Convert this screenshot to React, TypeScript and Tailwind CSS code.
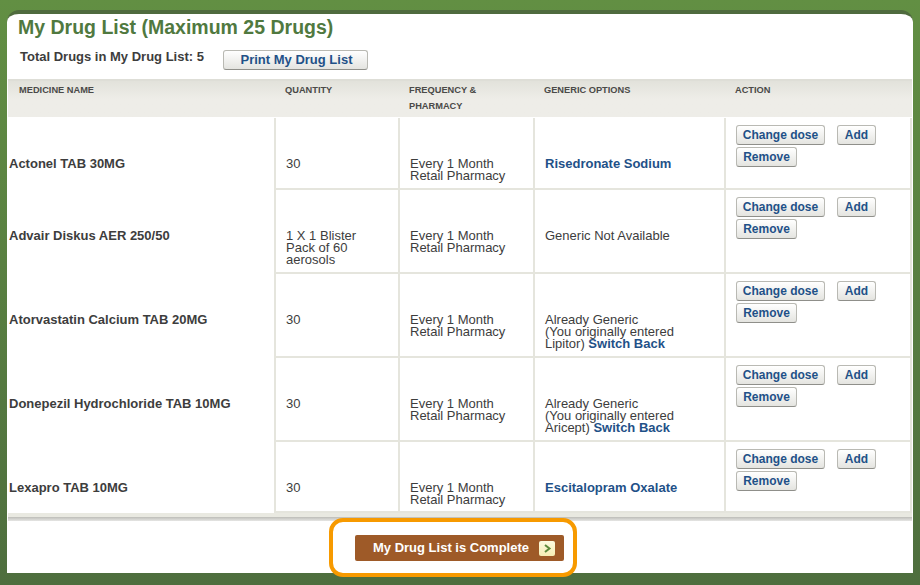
import React from 'react';

type Drug = {
  name: string;
  quantity: string[];
  generic: React.ReactNode;
  height: string;
};

const SwitchBack = () => <a className="font-bold text-[#1f5188]">Switch Back</a>;

const drugs: Drug[] = [
  {
    name: 'Actonel TAB 30MG',
    quantity: ['30'],
    generic: <a className="font-bold text-[#1f5188]">Risedronate Sodium</a>,
    height: 'h-[72px]',
  },
  {
    name: 'Advair Diskus AER 250/50',
    quantity: ['1 X 1 Blister', 'Pack of 60', 'aerosols'],
    generic: 'Generic Not Available',
    height: 'h-[84px]',
  },
  {
    name: 'Atorvastatin Calcium TAB 20MG',
    quantity: ['30'],
    generic: (
      <>
        Already Generic
        <br />
        (You originally entered
        <br />
        Lipitor) <SwitchBack />
      </>
    ),
    height: 'h-[84px]',
  },
  {
    name: 'Donepezil Hydrochloride TAB 10MG',
    quantity: ['30'],
    generic: (
      <>
        Already Generic
        <br />
        (You originally entered
        <br />
        Aricept) <SwitchBack />
      </>
    ),
    height: 'h-[84px]',
  },
  {
    name: 'Lexapro TAB 10MG',
    quantity: ['30'],
    generic: <a className="font-bold text-[#1f5188]">Escitalopram Oxalate</a>,
    height: 'h-[71px]',
  },
];

const GrayButton = ({ label, className }: { label: string; className: string }) => (
  <button
    className={`block h-5 rounded-[3px] border border-[#b9b9b3] border-b-[#8f8f8a] bg-gradient-to-b from-white to-[#e4e4e0] font-bold leading-[16px] text-[#1f5188] ${className}`}
  >
    {label}
  </button>
);

const App: React.FC = () => {
  return (
    <div className="h-[585px] w-[920px] overflow-hidden bg-gradient-to-b from-[#628f43] to-[#4e6e3e] px-[7px] pt-[10px] font-['Liberation_Sans',Arial,sans-serif]">
      <div className="h-[563px] w-[906px] rounded-t-[12px] border-t-[4px] border-[#4f6b3e] bg-white">
        <h1 className="ml-[11px] h-[30px] text-[19.5px] font-bold leading-[27px] text-[#50793f]">
          My Drug List (Maximum 25 Drugs)
        </h1>

        <div className="flex h-[35px] items-start">
          <span className="ml-[13px] mt-[5px] w-[203px] text-[13px] font-bold leading-[16px] text-[#3d3d3d]">
            Total Drugs in My Drug List: 5
          </span>
          <GrayButton label="Print My Drug List" className="mt-[6px] w-[145px] pl-[2px] text-[13px]" />
        </div>

        {/* table */}
        <div className="ml-px w-[904px]">
          <div className="flex h-[38px] border-t-2 border-[#deded7] bg-gradient-to-b from-[#e2e2db] via-[#eeede8] to-[#eeede8] pt-px text-[9.25px] font-bold leading-[16px] text-[#4a4a48]">
            <div className="w-[266px] pl-[11px]">MEDICINE NAME</div>
            <div className="w-[124px] pl-[11px]">QUANTITY</div>
            <div className="w-[135px] pl-[11px]">
              FREQUENCY &amp;
              <br />
              PHARMACY
            </div>
            <div className="w-[191px] pl-[11px]">GENERIC OPTIONS</div>
            <div className="w-[188px] pl-[11px]">ACTION</div>
          </div>
          <div className="h-px" />

          {drugs.map((drug) => (
            <div key={drug.name} className={`flex ${drug.height} text-[13px] leading-[12px] text-[#3d3d3d]`}>
              <div className="w-[266px] pl-px pt-[40px] font-bold">{drug.name}</div>
              <div className="w-[124px] border-b-2 border-l-2 border-[#e5e5dd] pl-[10px] pt-[40px]">
                {drug.quantity.map((line) => (
                  <div key={line}>{line}</div>
                ))}
              </div>
              <div className="w-[135px] border-b-2 border-l-2 border-[#e5e5dd] pl-[10px] pt-[40px]">
                Every 1 Month
                <br />
                Retail Pharmacy
              </div>
              <div className="w-[191px] border-b-2 border-l-2 border-[#e5e5dd] pl-[10px] pt-[40px]">{drug.generic}</div>
              <div className="w-[188px] border-x-2 border-b-2 border-[#e5e5dd] pl-[10px] pt-[7px]">
                <div className="flex gap-[12px]">
                  <GrayButton label="Change dose" className="w-[89px] text-[12px]" />
                  <GrayButton label="Add" className="w-[39px] text-[12px]" />
                </div>
                <GrayButton label="Remove" className="mt-[2px] w-[61px] text-[12px]" />
              </div>
            </div>
          ))}
          <div className="h-[4px] bg-[#e9e9e1]" />
          <div className="h-[4px] bg-gradient-to-b from-[#bdbdb8] to-[#e6e6e4]" />
        </div>

        <div className="relative z-10 -mt-[3px] ml-[322px] h-[59px] w-[248px] rounded-[14px] border-[4px] border-[#f79a00] bg-white pl-[22px] pt-[13px]">
          <button className="flex h-[26px] w-[209px] items-center rounded-[2px] bg-[#9e5a28] pl-[18px] text-[13px] font-bold text-white">
            My Drug List is Complete
            <span className="ml-[10px] flex h-[15px] w-[16px] items-center justify-center rounded-[2px] bg-gradient-to-b from-[#fdfbe0] to-[#f6eeb4]">
              <svg width="9" height="9" viewBox="0 0 9 9">
                <path d="M2 1 L6.5 4.5 L2 8" fill="none" stroke="#5d8a3c" strokeWidth="2" />
              </svg>
            </span>
          </button>
        </div>
      </div>
    </div>
  );
};

export default App;
